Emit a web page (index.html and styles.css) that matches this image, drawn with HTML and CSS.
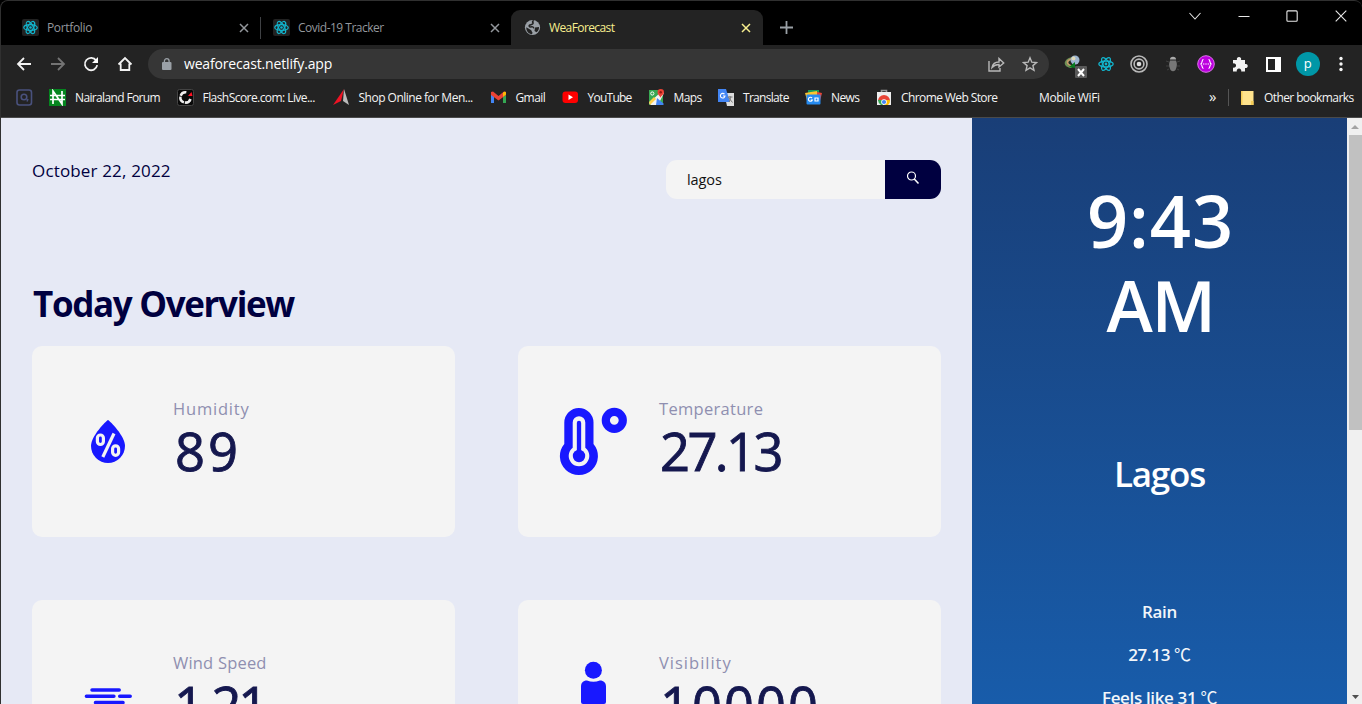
FILE: index.html
```html
<!DOCTYPE html>
<html lang="en">
<head>
<meta charset="utf-8">
<title>WeaForecast</title>
<link rel="stylesheet" href="styles.css">
</head>
<body>
<svg class="defs" width="0" height="0">
  <symbol id="atom" viewBox="0 0 16 16"><g fill="none" stroke="#12b4cc" stroke-width="1.300"><ellipse cx="8" cy="8" rx="7.200" ry="3"/><ellipse cx="8" cy="8" rx="7.200" ry="3" transform="rotate(60 8 8)"/><ellipse cx="8" cy="8" rx="7.200" ry="3" transform="rotate(120 8 8)"/></g><circle cx="8" cy="8" r="1.400" fill="#12b4cc"/></symbol>
  <symbol id="x" viewBox="0 0 10 10"><path d="M1 1l8 8M9 1l-8 8" fill="none" stroke="currentColor" stroke-width="1.500"/></symbol>
</svg>
<div class="window">
  <header class="tabs">
    <div class="tab"><span class="fav"><svg width="15" height="15"><use href="#atom"/></svg></span><span class="title">Portfolio</span><svg class="close" width="10" height="10"><use href="#x"/></svg></div>
    <div class="tab divided"><span class="fav"><svg width="15" height="15"><use href="#atom"/></svg></span><span class="title covid">Covid-19 Tracker</span><svg class="close" width="10" height="10"><use href="#x"/></svg></div>
    <div class="tab active">
      <svg class="globe" width="17" height="17" viewBox="0 0 17 17"><circle cx="8.500" cy="8.500" r="7.600" fill="#9aa0a6"/><path d="M9.800 1.500c-1.500.5-1.600 2-.6 2.500 0 1.500-2 1.500-3.400 2-1.300.8-.5 2 .8 2 1.500-.6 3-.2 3.200 1.300" fill="none" stroke="#232323" stroke-width="1.500"/><path d="M2.300 8.300l4.200 2.500c1.400.6 1 1.800 2 2.700l-.4 1.800C4.500 15 2 12 2.300 8.300zM11 8.500l4-.5c.2 2-.8 4-2.500 5.300L10.500 12z" fill="#232323"/></svg>
      <span class="title">WeaForecast</span><svg class="close" width="10" height="10"><use href="#x"/></svg></div>
    <svg class="plus" width="13" height="13" viewBox="0 0 13 13"><path d="M6.500 0v13M0 6.500h13" stroke="#9aa0a6" stroke-width="1.800"/></svg>
    <div class="controls">
      <svg width="12" height="12" viewBox="0 0 12 12"><path d="M.5 3l5.500 6 5.500-6"/></svg>
      <svg width="12" height="12" viewBox="0 0 12 12"><path d="M.5 6.500h11"/></svg>
      <svg width="12" height="12" viewBox="0 0 12 12"><rect x=".9" y=".9" width="10.300" height="10.300" rx="1"/></svg>
      <svg width="12" height="12" viewBox="0 0 12 12"><path d="M.7.700l10.600 10.600M11.300.700L.700 11.300"/></svg>
    </div>
  </header>
  <nav class="toolbar">
    <svg class="nav" width="16" height="16" viewBox="0 0 16 16"><path d="M15 8H2M8 2L2 8l6 6"/></svg>
    <svg class="nav dim" width="16" height="16" viewBox="0 0 16 16"><path d="M1 8h13M8 2l6 6-6 6"/></svg>
    <svg class="nav" width="16" height="16" viewBox="0 0 16 16"><path d="M13.200 4.500A6.200 6.200 0 1 0 14.200 9.200"/><path d="M15 1v6H9z" fill="#fff" stroke="none"/></svg>
    <svg class="nav" width="16" height="16" viewBox="0 0 16 16"><path d="M1.500 8.500L8 2l6.500 6.500M3.700 7.500V14h8.600V7.500"/></svg>
    <div class="omnibox">
      <svg width="10" height="13" viewBox="0 0 10 13"><rect x="0" y="4" width="9.500" height="8" rx="1" fill="#9aa0a6"/><path d="M2.400 4.500V3a2.300 2.300 0 0 1 4.700 0v1.500" fill="none" stroke="#9aa0a6" stroke-width="1.300"/></svg>
      <span class="url">weaforecast.netlify.app</span>
      <svg class="share" width="17" height="15" viewBox="0 0 17 15"><path d="M1 4v10h11v-3M4 10.500c.5-3 3-5.500 7-5.500V1.500l4.700 4.500L11 10V7.500c-3 0-5 .8-7 3z"/></svg>
      <svg class="star" width="16" height="16" viewBox="0 0 16 16"><path d="M8 1.800l1.800 4.400 4.700.4-3.600 3 1.100 4.700L8 11.800l-4 2.500 1.100-4.700-3.600-3 4.700-.4z"/></svg>
    </div>
    <div class="extensions">
      <svg class="e1" width="24" height="24" viewBox="0 0 24 24"><path d="M9 3C0 5-1 13 8 14l3-2C4 11 3 7 11 5z" fill="#6c8f55"/><path d="M8 5C3 7 3 10 9 12" stroke="#c79769" fill="none" stroke-width="1.500"/><circle cx="12" cy="6" r="4.500" fill="#9db5cf"/><circle cx="10.500" cy="4.500" r="2" fill="#dfd9b8"/><path d="M6 13l6-5v6z" fill="#087c20"/><rect x="12" y="12" width="12" height="12" rx="1" fill="#595959"/><path d="M15 15l6 7M21 15l-6 7" stroke="#fff" stroke-width="2"/></svg>
      <svg class="e2" width="16" height="16"><use href="#atom"/></svg>
      <svg class="e3" width="18" height="18" viewBox="0 0 18 18"><g fill="none" stroke="#b8b8b8" stroke-width="1.600"><circle cx="9" cy="9" r="8"/><circle cx="9" cy="9" r="4.900"/></g><circle cx="9" cy="9" r="2.300" fill="#ddd"/></svg>
      <svg class="e4" width="14" height="16" viewBox="0 0 14 16"><path d="M4 3.500a3 2.800 0 0 1 6 0z" fill="#aaa"/><path d="M4 4.500h6q2 5-.5 9.500Q7 16.500 4.500 14 2 9.500 4 4.500z" fill="#777"/><path d="M0 5l3 1M14 5l-3 1M0 10h3M14 10h-3M1 14l2-1M13 14l-2-1" stroke="#404040"/></svg>
      <svg class="e5" width="18" height="18" viewBox="0 0 18 18"><circle cx="9" cy="9" r="8.300" fill="#bd00df" stroke="#dc72ea"/><path d="M6.500 4.500C4.300 4.500 6 8.500 3.500 9c2.500.5.8 4.500 3 4.500M11.500 4.500c2.200 0 .5 4 3 4.500-2.500.5-.8 4.500-3 4.500M6 9h1.400M8.300 9h1.400M10.600 9H12" stroke="#fff" fill="none" stroke-width="1.200"/></svg>
      <svg class="e6" width="16" height="16" viewBox="0 0 16 16"><path d="M1 4h4a2.200 2.200 0 1 1 4 0h4v4a2.100 2.100 0 1 1 0 4v3.500H9.200a2.300 2.300 0 1 0-4.400 0H1v-4a2.200 2.200 0 1 0 0-4z" fill="#f2f2f2"/></svg>
      <svg class="e7" width="15" height="15" viewBox="0 0 15 15"><path d="M1 1h13v13H1z" fill="none" stroke="#fff" stroke-width="2"/><path d="M9 0h6v15H9z" fill="#fff"/></svg>
      <span class="avatar">p</span>
      <svg class="dots" width="4" height="16" viewBox="0 0 4 16"><g fill="#f4f4f4"><circle cx="2" cy="2.500" r="1.700"/><circle cx="2" cy="8" r="1.700"/><circle cx="2" cy="13.500" r="1.700"/></g></svg>
    </div>
  </nav>
  <div class="bookmarks">
    <span class="bm b0"><svg width="17" height="17" viewBox="0 0 17 17"><rect x="1" y="1" width="14.500" height="15" rx="2.500" fill="none" stroke="#49517d" stroke-width="1.600"/><circle cx="8" cy="8" r="2.800" fill="none" stroke="#49517d" stroke-width="1.600"/><path d="M12 10l-1 2.500" stroke="#49517d" stroke-width="1.500"/></svg></span>
    <span class="bm b1"><svg width="17" height="17" viewBox="0 0 17 17"><path fill="#05851f" d="M0 0h17v17H0z"/><path d="M4 15V2l9 13V2M1 6.500h15M1 10.500h15" fill="none" stroke="#fff" stroke-width="1.700"/></svg>Nairaland Forum</span>
    <span class="bm b2"><svg width="17" height="17" viewBox="0 0 17 17"><rect x=".5" y=".5" width="16" height="16" rx="2" fill="#090909" stroke="#444"/><path d="M13.500 10A5.200 5.200 0 1 1 10 3.400" fill="none" stroke="#eee" stroke-width="2.500" stroke-dasharray="7 1"/><path d="M11 7l3.500-4 1 4z" fill="#f12"/></svg>FlashScore.com: Live...</span>
    <span class="bm b3"><svg width="17" height="17" viewBox="0 0 17 17"><path d="M11 0L0 16l8-4z" fill="#ef1324"/><path d="M11 0l5 16-6-4z" fill="#bbb"/></svg>Shop Online for Men...</span>
    <span class="bm b4"><svg width="17" height="17" viewBox="0 0 17 17"><path d="M1 4v10h3V6z" fill="#4285f4"/><path d="M13 6v8h3V4z" fill="#34a853"/><path d="M1 3l2-.5 5.500 4.500L14 2.500l2 .5v3l-7.500 5.500L1 6z" fill="#ea4335"/><path d="M13 3.500l2-1 1 1v2l-3 2.300z" fill="#fbbc04"/></svg>Gmail</span>
    <span class="bm b5"><svg width="17" height="17" viewBox="0 0 17 17"><rect x=".5" y="2.500" width="15.500" height="11.500" rx="3" fill="#f00"/><path d="M6.500 5.500v5.500l4.500-2.700z" fill="#fff"/></svg>YouTube</span>
    <span class="bm b6"><svg width="17" height="17" viewBox="0 0 17 17"><path d="M1 1h14v15H1z" fill="#38a852"/><path d="M1 14L14 2l2 2-6 12H3z" fill="#f3f3f3"/><path d="M9 9l7 6-1 1H8z" fill="#4285f4"/><path d="M1 13l5-5 2 2-6 6z" fill="#ffd04b"/><path d="M12.500 9C12 6.500 9.500 6 9.500 3.300a3.200 3.200 0 0 1 6.500 0C16 6 13 6.500 12.500 9z" fill="#ea4335"/><circle cx="12.700" cy="3.300" r="1.200" fill="#901b15"/><circle cx="4.300" cy="4.500" r="1.600" fill="none" stroke="#fff"/></svg>Maps</span>
    <span class="bm b7"><svg width="18" height="17" viewBox="0 0 18 17"><path d="M7 4h10v13H10z" fill="#ddd"/><path d="M1 0h8l4 13H1z" fill="#4285f4"/><path d="M7.500 5.200A2.300 2.300 0 1 0 8 7H6" stroke="#fff" fill="none" stroke-width="1.100"/><path d="M10.500 8h5M13 7c1 3-.5 5-1 6m-.5-4.500l4 5" stroke="#777" fill="none"/></svg>Translate</span>
    <span class="bm b8"><svg width="17" height="17" viewBox="0 0 17 17"><path d="M3 1h11v8H3z" fill="#189a56"/><path d="M0 4l12-2v9H2z" fill="#fbc52e"/><path d="M12 3l5 1-2 8h-3z" fill="#e74437"/><rect x="1.500" y="5.500" width="14" height="10" rx="1" fill="#258bf1"/><path d="M7 9a2 2 0 1 0 .3 2H5.800M10 9h3v3h-3z" stroke="#fff" fill="none" stroke-width="1.200"/></svg>News</span>
    <span class="bm b9"><svg width="17" height="17" viewBox="0 0 17 17"><path d="M5.500 4V1.500h5V4" fill="none" stroke="#999" stroke-width="1.600"/><path d="M1 3h14v13H1z" fill="#eee"/><path d="M2 12a6 6 0 0 1 12 0z" fill="#e84436"/><path d="M2 11a6 6 0 0 0 3 5h2v-5z" fill="#34a853"/><path d="M9 11h5a6 6 0 0 1-2 5H8z" fill="#fbbc04"/><circle cx="8" cy="13" r="2.800" fill="#fff"/><circle cx="8" cy="13" r="2.100" fill="#4285f4"/></svg>Chrome Web Store</span>
    <span class="bm b10">Mobile WiFi</span>
    <span class="bm b11">»</span>
    <span class="bm b12"><svg width="15" height="16" viewBox="0 0 15 16"><path d="M1 1h12.500v14H1z" fill="#ffe38d"/><path d="M1 1h1.500v14H1zM11 11h2.500v4H11z" fill="#f5cd58"/></svg>Other bookmarks</span>
  </div>
  <div class="viewport">
    <main class="main">
      <div class="top">
        <p class="date">October 22, 2022</p>
        <form class="search"><span class="query">lagos</span><button class="go" type="button"><svg width="14" height="14" viewBox="0 0 14 14"><circle cx="5.500" cy="5" r="4" fill="none" stroke="#fff" stroke-width="1.200"/><path d="M8.300 8l4.200 4.500" stroke="#fff" stroke-width="1.500"/></svg></button></form>
      </div>
      <h1 class="heading">Today Overview</h1>
      <section class="cards">
        <article class="card">
          <svg width="80" height="80" viewBox="0 0 80 80"><path d="M40 19c2 1 17 16 17 26a17 17 0 0 1-34 0c0-10 15-25 17-26z" fill="#1818ff"/><g fill="none" stroke="#f3f3f3"><rect x="29.400" y="34" width="6" height="9.500" rx="3" stroke-width="3.200"/><rect x="44.600" y="44.800" width="6" height="9.500" rx="3" stroke-width="3.200"/><path d="M46 32.500L34.800 56" stroke-width="3.200"/></g></svg>
          <div><p class="label l1">Humidity</p><p class="value v1">89</p></div>
        </article>
        <article class="card">
          <svg width="80" height="80" viewBox="0 0 80 80"><path d="M10.300 21.500a14.600 14.600 0 0 1 29.200 0v21.400a19 19 0 1 1-29.200 0z" fill="#1818ff"/><path d="M18.700 21.500a6.300 6.300 0 0 1 12.600 0v25.300a10.300 10.300 0 1 1-12.600 0z" fill="#f3f3f3"/><path d="M25 22v30" stroke="#1818ff" stroke-width="4.300" stroke-linecap="round"/><circle cx="25" cy="55" r="6.200" fill="#1818ff"/><circle cx="60.300" cy="19.300" r="8.500" fill="none" stroke="#1818ff" stroke-width="8.200"/></svg>
          <div><p class="label l2">Temperature</p><p class="value v2">27.13</p></div>
        </article>
        <article class="card">
          <svg width="80" height="80" viewBox="0 0 80 80"><path d="M24 35h27.200M18.400 41.300h27.500M51.700 41.300h10.500M27.500 47.500H55" stroke="#1818ff" stroke-width="3.500" stroke-linecap="round"/></svg>
          <div><p class="label">Wind Speed</p><p class="value v3">1.21</p></div>
        </article>
        <article class="card">
          <svg width="80" height="80" viewBox="0 0 80 80"><circle cx="39.400" cy="15.300" r="8.500" fill="#1818ff"/><path d="M33 25.500q6.400 2.500 12.800 0c4 0 6.200 2.500 6.200 6V47q0 2-2 2H29q-2 0-2-2V31.500c0-3.500 2-6 6-6z" fill="#1818ff"/></svg>
          <div><p class="label l4">Visibility</p><p class="value">10000</p></div>
        </article>
      </section>
    </main>
    <aside class="side">
      <p class="clock">9:43<br><span class="am">AM</span></p>
      <h2 class="city">Lagos</h2>
      <p class="info">Rain</p>
      <p class="info">27.13 <span class="deg">℃</span></p>
      <p class="info">Feels like 31 <span class="deg">℃</span></p>
    </aside>
    <div class="scrollbar">
      <svg width="15" height="17" viewBox="0 0 15 17"><path d="M4 11l4-4 4 4z" fill="#a3a3a3"/></svg>
      <div class="thumb"></div>
      <svg class="down" width="15" height="17" viewBox="0 0 15 17"><path d="M5 8h7l-3.500 4z" fill="#505050"/></svg>
    </div>
  </div>
</div>
</body>
</html>
```
FILE: styles.css
```css
* { box-sizing: border-box; }
body { margin: 0; background: #000; overflow: hidden; font-family: "Open Sans", "Noto Sans", sans-serif; }
p, h1, h2 { margin: 0; font-weight: 400; }
svg { flex: none; display: block; }
.defs { position: absolute; }
.window { height: 704px; display: flex; flex-direction: column; background: #232323; border-left: 1px solid #303030; border-top: 1px solid #303030; border-top-left-radius: 8px; border-top-right-radius: 8px; overflow: hidden; }

.tabs { height: 44px; flex: none; display: flex; background: #000; padding-left: 8px; align-items: flex-end; }
.tab { width: 251px; height: 35px; display: flex; align-items: center; padding: 0 11px 0 13px; color: #93979c; font-size: 12px; letter-spacing: -.35px; }
.divided { padding-left: 12px; border-left: 1px solid transparent; border-image: linear-gradient(transparent 22%, #3f4144 22%, #3f4144 80%, transparent 80%) 1; }
.fav { width: 17px; height: 17px; background: #222; border-radius: 2px; display: flex; align-items: center; justify-content: center; }
.title { margin-left: 8px; flex: 1; white-space: nowrap; }
.covid { letter-spacing: -.5px; }
.tab.active { background: #232323; border-radius: 9px 9px 0 0; color: #f7ee8e; width: 252px; padding-right: 12px; }
.active .title { letter-spacing: -.6px; }
.plus { margin: 0 0 11px 17px; }
.controls { margin-left: auto; align-self: flex-start; display: flex; gap: 36.5px; padding: 9px 15.500px 0 0; }
.controls svg { fill: none; stroke: #e8e8e8; stroke-width: 1.1; }

.toolbar { height: 38px; flex: none; display: flex; align-items: center; padding-left: 15px; }
.nav { margin-right: 17.700px; fill: none; stroke: #f2f2f2; stroke-width: 1.800; }
.dim { stroke: #747474; }
.omnibox { width: 901px; height: 30px; border-radius: 15px; background: #363636; display: flex; align-items: center; padding: 0 11px 0 14px; margin-left: -2.800px; }
.url { color: #fff; font-size: 14px; letter-spacing: -.16px; margin-left: 12px; flex: 1; line-height: 20px; }
.share, .star { fill: none; stroke: #b8b8b8; stroke-width: 1.400; }
.share { margin-right: 17px; }
.extensions { display: flex; flex: 1; align-items: center; margin-left: 13.800px; }
.e1 { margin-top: 4px; }
.e2 { margin-left: 11px; }
.e3 { margin-left: 16px; }
.e4 { margin-left: 18px; }
.e5 { margin-left: 17px; }
.e6 { margin-left: 17px; }
.e7 { margin-left: 18px; }
.avatar { width: 24px; height: 24px; border-radius: 50%; background: #0097a7; color: #fff; font-size: 13px; line-height: 22px; text-align: center; margin-left: 15px; }
.dots { margin-left: 19px; }

.bookmarks { height: 35px; flex: none; display: flex; padding: 0 0 5px 15px; border-bottom: 1px solid #4a4a4a; color: #f4f4f4; font-size: 12px; letter-spacing: -.6px; }
.bm { display: flex; align-items: center; flex: none; gap: 9px; white-space: nowrap; }
.b0 { width: 33px; } .b1 { width: 127.500px; letter-spacing: -.64px; } .b2 { width: 156px; letter-spacing: -.56px; } .b3 { width: 157px; letter-spacing: -.5px; } .b4 { width: 72px; }
.b5 { width: 86px; letter-spacing: -.75px; } .b6 { width: 69.500px; } .b7 { width: 88px; gap: 8px; letter-spacing: -.7px; } .b8 { width: 71px; }
.b9 { width: 163px; gap: 8px; } .b10 { width: 170px; letter-spacing: -.35px; } .b11 { width: 19px; font-size: 15px; padding-bottom: 3px; }
.b12 { border-left: 1px solid #555; padding-left: 11px; height: 17px; align-self: center; }

.viewport { flex: 1; min-height: 0; display: flex; }
.main { width: 971px; background: #e6e9f5; padding: 41px 31px 0; overflow: hidden; color: #000040; }
.top { display: flex; justify-content: space-between; height: 123px; }
.date { font-size: 17px; line-height: 24px; letter-spacing: .16px; }
.search { display: flex; width: 275px; height: 39px; margin-top: 1px; border-radius: 11px; overflow: hidden; background: #f4f4f4; }
.query { flex: 1; padding-left: 21px; color: #111; font-size: 14.500px; line-height: 39px; letter-spacing: -.1px; }
.go { width: 56px; border: 0; padding: 0 0 3px; background: #000040; display: flex; align-items: center; justify-content: center; }
.heading { font-size: 35px; font-weight: 700; line-height: 44px; letter-spacing: -1.350px; padding-left: 1px; white-space: nowrap; }
.cards { display: grid; grid-template-columns: 423px 423px; grid-auto-rows: 191px; gap: 63px; margin-top: 20px; }
.card { display: flex; gap: 25px; background: #f4f4f4; border-radius: 10px; padding: 52px 0 0 36px; }
.card svg { margin-top: 3px; }
.label { font-size: 16.500px; line-height: 21px; color: #8f8fb0; white-space: nowrap; letter-spacing: .2px; }
.l1 { letter-spacing: .8px; }
.l2 { letter-spacing: .3px; }
.l4 { letter-spacing: 1px; }
.value { font-size: 52.500px; line-height: 64px; color: #15184f; letter-spacing: 2px; padding-left: 1px; -webkit-text-stroke: .9px #15184f; }
.v1 { letter-spacing: 3px; padding-left: 2px; }
.v2 { letter-spacing: -2.600px; }
.v3 { letter-spacing: -3.200px; }

.side { width: 375px; overflow: hidden; background: linear-gradient(#193e77, #185caa); color: #fff; text-align: center; padding-top: 60px; }
.clock { font-size: 72px; line-height: 84px; font-weight: 600; letter-spacing: 1px; padding-left: 2px; }
.am { letter-spacing: -1.500px; font-size: 70px; }
.city { font-size: 35px; line-height: 40px; font-weight: 600; margin: 107px 0 96px; letter-spacing: -1.200px; }
.info { font-size: 17px; line-height: 43px; font-weight: 600; opacity: .95; letter-spacing: -.35px; }
.deg { font-family: "Noto Sans CJK JP", sans-serif; font-size: 17px; font-weight: 400; line-height: 1; }
.scrollbar { width: 15px; background: #f0f0f0; display: flex; flex-direction: column; }
.thumb { height: 295px; margin-left: 2px; background: #c1c1c1; }
.down { margin-top: auto; }
```
